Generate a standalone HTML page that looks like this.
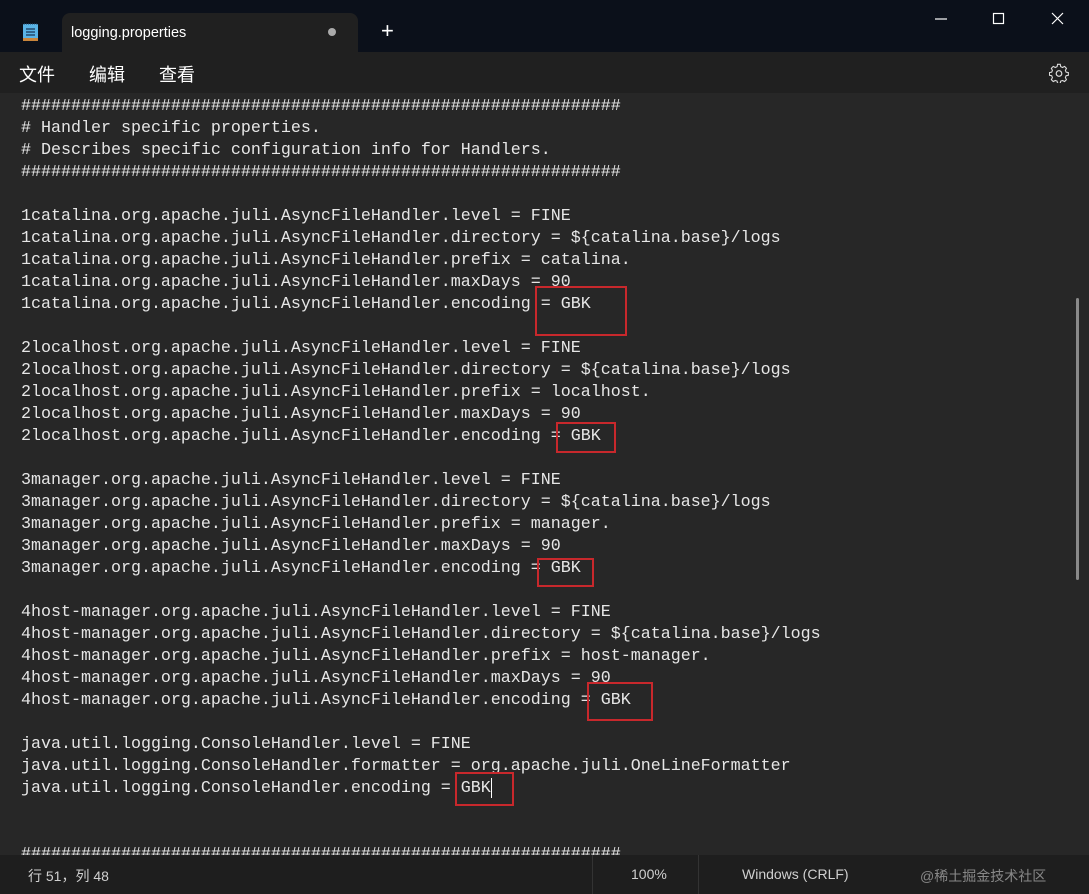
<!DOCTYPE html>
<html><head><meta charset="utf-8"><style>
*{margin:0;padding:0;box-sizing:border-box}
body{width:1089px;height:894px;background:#272727;overflow:hidden;position:relative;font-family:"Liberation Sans","Noto Sans CJK SC",sans-serif}
#title{position:absolute;left:0;top:0;width:1089px;height:52px;background:#0b101a}
#tab{position:absolute;left:62px;top:13px;width:296px;height:39px;background:#202020;border-radius:8px 8px 0 0}
#menu{position:absolute;left:0;top:52px;width:1089px;height:41px;background:#202020}
#ed{position:absolute;left:21px;top:96px;font-family:"Liberation Mono",monospace;font-size:16.67px;line-height:22px;color:#e6e6e6;white-space:pre}
.box{position:absolute;border:2px solid #c8282c}
#status{position:absolute;left:0;top:855px;width:1089px;height:39px;background:#1e1e1e;color:#d0d0d0;font-size:14px}
#status span{position:absolute;top:11px}
.sep{position:absolute;top:0;width:1px;height:39px;background:#333}
</style></head><body>
<div id="title">
<svg style="position:absolute;left:22px;top:22px" width="17" height="20"><rect x="1" y="2" width="15" height="17" rx="1" fill="#5ab4e6"/><rect x="1" y="16" width="15" height="3" fill="#c9853b"/><g stroke="#1a3a5a" stroke-width="1.3"><line x1="4" y1="7" x2="13" y2="7"/><line x1="4" y1="10" x2="13" y2="10"/><line x1="4" y1="13" x2="13" y2="13"/></g><line x1="2" y1="2" x2="15" y2="2" stroke="#2a4a6a" stroke-dasharray="1 1"/></svg>
<div id="tab"><span style="position:absolute;left:9px;top:12px;color:#fff;font-size:14.5px">logging.properties</span><span style="position:absolute;left:266px;top:15px;width:8px;height:8px;border-radius:50%;background:#aaa"></span></div>
<span style="position:absolute;left:381px;top:18px;color:#fff;font-size:22px;font-weight:300">+</span>
<svg style="position:absolute;left:930px;top:10px" width="150" height="20" stroke="#fff" stroke-width="1.2" fill="none"><line x1="5" y1="9" x2="17" y2="9"/><rect x="63.5" y="3.5" width="10" height="10"/><path d="M122 3L133 14M133 3L122 14"/></svg>
</div>
<div id="menu">
<span style="position:absolute;left:19px;top:9px;color:#fff;font-size:18px">文件</span>
<span style="position:absolute;left:89px;top:9px;color:#fff;font-size:18px">编辑</span>
<span style="position:absolute;left:159px;top:9px;color:#fff;font-size:18px">查看</span>
<svg style="position:absolute;left:1049px;top:11px" width="20" height="20" fill="none" stroke="#ddd" stroke-width="1.2"><path d="M8.5 1.5h3l.5 2.5 2 1 2.3-1.2 2.1 2.1-1.2 2.3.8 2 2.5.5v3l-2.5.5-.8 2 1.2 2.3-2.1 2.1-2.3-1.2-2 .8-.5 2.5h-3l-.5-2.5-2-.8-2.3 1.2-2.1-2.1 1.2-2.3-.8-2-2.5-.5v-3l2.5-.5.8-2-1.2-2.3 2.1-2.1 2.3 1.2 2-1z" transform="scale(0.9) translate(1 0)"/><circle cx="10" cy="10.5" r="2.8"/></svg>
</div>
<div id="ed">############################################################
# Handler specific properties.
# Describes specific configuration info for Handlers.
############################################################

1catalina.org.apache.juli.AsyncFileHandler.level = FINE
1catalina.org.apache.juli.AsyncFileHandler.directory = ${catalina.base}/logs
1catalina.org.apache.juli.AsyncFileHandler.prefix = catalina.
1catalina.org.apache.juli.AsyncFileHandler.maxDays = 90
1catalina.org.apache.juli.AsyncFileHandler.encoding = GBK

2localhost.org.apache.juli.AsyncFileHandler.level = FINE
2localhost.org.apache.juli.AsyncFileHandler.directory = ${catalina.base}/logs
2localhost.org.apache.juli.AsyncFileHandler.prefix = localhost.
2localhost.org.apache.juli.AsyncFileHandler.maxDays = 90
2localhost.org.apache.juli.AsyncFileHandler.encoding = GBK

3manager.org.apache.juli.AsyncFileHandler.level = FINE
3manager.org.apache.juli.AsyncFileHandler.directory = ${catalina.base}/logs
3manager.org.apache.juli.AsyncFileHandler.prefix = manager.
3manager.org.apache.juli.AsyncFileHandler.maxDays = 90
3manager.org.apache.juli.AsyncFileHandler.encoding = GBK

4host-manager.org.apache.juli.AsyncFileHandler.level = FINE
4host-manager.org.apache.juli.AsyncFileHandler.directory = ${catalina.base}/logs
4host-manager.org.apache.juli.AsyncFileHandler.prefix = host-manager.
4host-manager.org.apache.juli.AsyncFileHandler.maxDays = 90
4host-manager.org.apache.juli.AsyncFileHandler.encoding = GBK

java.util.logging.ConsoleHandler.level = FINE
java.util.logging.ConsoleHandler.formatter = org.apache.juli.OneLineFormatter
java.util.logging.ConsoleHandler.encoding = GBK


############################################################</div>
<div style="position:absolute;left:491px;top:778px;width:1px;height:20px;background:#fff"></div>
<div class="box" style="left:535px;top:286px;width:92px;height:50px"></div>
<div class="box" style="left:556px;top:422px;width:60px;height:31px"></div>
<div class="box" style="left:537px;top:558px;width:57px;height:29px"></div>
<div class="box" style="left:587px;top:682px;width:66px;height:39px"></div>
<div class="box" style="left:455px;top:772px;width:59px;height:34px"></div>
<div style="position:absolute;left:1076px;top:298px;width:3px;height:282px;background:#8a8a8a;border-radius:2px"></div>
<div id="status">
<span style="left:28px">行 51，列 48</span>
<div class="sep" style="left:592px"></div>
<span style="left:631px">100%</span>
<div class="sep" style="left:698px"></div>
<span style="left:742px">Windows (CRLF)</span>
<span style="left:920px;color:#888">@稀土掘金技术社区</span>
</div>
</body></html>
